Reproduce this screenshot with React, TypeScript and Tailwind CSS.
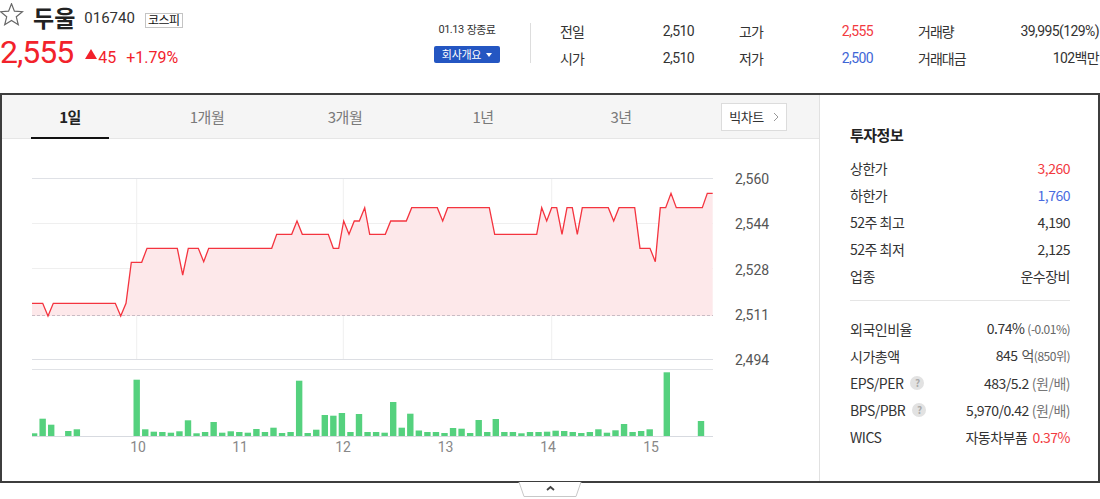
import React from "react";

const LINE: [number, number][] = [
  [32, 303.3], [42.7, 303.3], [48, 316], [53.3, 303.3], [115.3, 303.3], [120.7, 316], [126, 303.3],
  [131.3, 262.3], [141.7, 262.3], [147, 248.3], [177.3, 248.3], [182.7, 275], [188.3, 248.3],
  [198.3, 248.3], [203.7, 261.7], [208.7, 248.3], [271.7, 248.3], [276.7, 234.3], [291.7, 234.3],
  [297, 221], [302.3, 234.3], [328.3, 234.3], [333.3, 248.3], [338.7, 248.3], [343.7, 221],
  [349, 234.3], [354.3, 221], [359.3, 221], [364.7, 207.7], [369.7, 234.3], [385.3, 234.3],
  [390.7, 221], [406.3, 221], [411.7, 207.7], [437.3, 207.7], [442.7, 221], [447.7, 207.7],
  [489.3, 207.7], [494.7, 234.3], [536.7, 234.3], [541.7, 207.7], [546.7, 221], [551.7, 207.7],
  [556.7, 207.7], [562, 234.3], [567, 207.7], [572.3, 207.7], [577.3, 234.3], [582.3, 207.7],
  [608.3, 207.7], [613.7, 221], [619, 207.7], [634.7, 207.7], [640, 248.3], [650, 248.3],
  [655.3, 261.7], [660.3, 207.7], [665.7, 207.7], [671, 193.3], [676.3, 207.7], [702.3, 207.7],
  [707.3, 193.3], [712.7, 193.3],
];

const VOLS: Record<number, number> = {
  0: 433.3, 1: 418.7, 2: 424.7, 4: 431, 5: 429.3, 12: 379.7, 13: 429.3, 14: 431.7, 15: 432, 16: 432.7,
  17: 431.3, 18: 420.3, 19: 433.3, 20: 432, 21: 422, 22: 432.7, 23: 431.3, 24: 432, 25: 432.7, 26: 429,
  27: 432, 28: 427.7, 29: 433, 30: 432, 31: 380.7, 32: 433, 33: 429.7, 34: 415, 35: 415.7, 36: 413,
  37: 432, 38: 414, 39: 432, 40: 432, 41: 432.7, 42: 402, 43: 427.7, 44: 413.7, 45: 430.5, 46: 432,
  47: 432, 48: 433, 49: 428, 50: 428.7, 51: 433, 52: 420, 53: 432, 54: 419, 55: 432, 56: 432,
  57: 433.3, 58: 432, 59: 432, 60: 431.7, 61: 430.7, 62: 431, 63: 432, 64: 433, 65: 432, 66: 429.3,
  67: 432.7, 68: 430.3, 69: 424, 70: 432, 71: 431, 72: 429.3, 74: 372.3, 78: 421,
};

const KR = { fontFamily: '"Noto Sans CJK KR", "Noto Sans", sans-serif' };
const RB = { fontFamily: 'Roboto, "Noto Sans CJK KR", sans-serif' };

function Star() {
  return (
    <svg width="25" height="24" viewBox="0 0 25 24" className="-ml-[1px]">
      <polygon
        points="12.5,0.8 15.4,8.1 23.5,8.7 17.3,13.8 19.3,21.8 12.5,17.5 5.7,21.8 7.7,13.8 1.5,8.7 9.6,8.1"
        fill="none"
        stroke="#666"
        strokeWidth="1.2"
        strokeLinejoin="miter"
      />
    </svg>
  );
}

function Chart() {
  const pts = LINE.map((p) => p.join(",")).join(" ");
  const area = `32,316 ${pts} 712.7,316`;
  const bars: React.ReactNode[] = [];
  Object.entries(VOLS).forEach(([k, top]) => {
    const i = Number(k);
    let x = 34.1 + i * 8.55 - 3.2;
    let w = 6.4;
    if (x < 32) {
      w = w - (32 - x);
      x = 32;
    }
    bars.push(<rect key={i} x={x} y={top} width={w} height={436 - top} fill="#55d17e" />);
  });
  const yLabels: [string, number][] = [
    ["2,560", 179],
    ["2,544", 224],
    ["2,528", 269.5],
    ["2,511", 314.5],
    ["2,494", 359.5],
  ];
  const xLabels: [string, number][] = [
    ["10", 138],
    ["11", 240],
    ["12", 343],
    ["13", 445.5],
    ["14", 548],
    ["15", 651],
  ];
  return (
    <svg width="817" height="342" viewBox="2 139 817 342" className="block">
      {[136.7, 343.3, 551.7].map((x) => (
        <line key={x} x1={x} y1={178} x2={x} y2={359} stroke="#efefef" strokeWidth="1" />
      ))}
      <line x1="32" y1="178.5" x2="713" y2="178.5" stroke="#dfe1e6" strokeWidth="1" />
      <line x1="32" y1="223.5" x2="713" y2="223.5" stroke="#efefef" strokeWidth="1" />
      <line x1="32" y1="268.5" x2="713" y2="268.5" stroke="#efefef" strokeWidth="1" />
      <polygon points={area} fill="#fde8ea" />
      <line x1="32" y1="315.5" x2="713" y2="315.5" stroke="#c9bcc4" strokeWidth="1" strokeDasharray="3 2" />
      <polyline points={pts} fill="none" stroke="#f4343f" strokeWidth="1.3" strokeLinejoin="miter" />
      <line x1="32" y1="359.5" x2="713" y2="359.5" stroke="#dcdee3" strokeWidth="1" />
      <line x1="32" y1="369.5" x2="713" y2="369.5" stroke="#e0e2e6" strokeWidth="1" />
      {bars}
      <line x1="32" y1="436.5" x2="713" y2="436.5" stroke="#d7dae0" strokeWidth="1" />
      {yLabels.map(([t, y]) => (
        <text key={t} x="735" y={y + 5} fontSize="14" fill="#555" style={RB}>
          {t}
        </text>
      ))}
      {xLabels.map(([t, x]) => (
        <text key={t} x={x} y={452} fontSize="14" fill="#888" textAnchor="middle" style={RB}>
          {t}
        </text>
      ))}
    </svg>
  );
}

function HeaderCell({ label, value, color }: { label: string; value: string; color?: string }) {
  return (
    <div className="flex h-[27px] items-center justify-between">
      <span className="text-[14px] leading-[20px] tracking-[-1px] text-[#333]" style={KR}>
        {label}
      </span>
      <span className="text-[14px] leading-[20px] tracking-[-0.6px]" style={{ ...RB, color: color || "#333" }}>
        {value}
      </span>
    </div>
  );
}

function InfoRow({ label, children, help }: { label: string; children: React.ReactNode; help?: boolean }) {
  return (
    <div className="flex h-[27px] items-center justify-between text-[14px] leading-[20px] tracking-[-0.5px] text-[#333]">
      <span className="flex items-center">
        {label}
        {help && (
          <span className="ml-[7px] flex h-[14px] w-[14px] items-center justify-center rounded-full bg-[#e2e2e2] text-[10px] font-bold leading-none text-[#aaa]">
            ?
          </span>
        )}
      </span>
      <span className="flex items-baseline">{children}</span>
    </div>
  );
}

export default function App() {
  const tabs = [
    { t: "1일", w: "w-[136px]", active: true },
    { t: "1개월", w: "w-[138px]" },
    { t: "3개월", w: "w-[138px]" },
    { t: "1년", w: "w-[138px]" },
    { t: "3년", w: "w-[138px]" },
  ];
  return (
    <div className="w-[1100px] h-[499px] bg-white overflow-hidden" style={KR}>
      {/* header */}
      <div className="flex h-[93px] items-start">
        <div className="w-[434px] flex flex-col">
          <div className="flex h-[30px] items-center">
            <Star />
            <span className="ml-[9px] mt-[4px] text-[23px] font-bold leading-[30px] text-[#222]">두울</span>
            <span className="ml-[9px] mt-[6px] text-[15px] leading-[20px] text-[#333]" style={RB}>
              016740
            </span>
            <span className="ml-[10px] mt-[10px] flex h-[15px] items-center border border-[#c4c4c4] px-[2px] text-[12px] leading-none text-[#111] tracking-[-0.5px]">
              코스피
            </span>
          </div>
          <div className="mt-[6px] flex items-baseline text-[#f2222b]" style={RB}>
            <span className="text-[32px] leading-none tracking-[-1px]">2,555</span>
            <svg width="12" height="10" viewBox="0 0 12 10" className="ml-[12px] self-center mt-[4px]">
              <polygon points="6,0 12,10 0,10" fill="#f2222b" />
            </svg>
            <span className="ml-[1px] text-[16px] leading-none">45</span>
            <span className="ml-[10px] text-[16px] leading-none">+1.79%</span>
          </div>
        </div>
        <div className="w-[66px] flex flex-col">
          <div className="mt-[21px] flex h-[17px] items-center justify-center text-[11px] leading-none tracking-[-0.5px] text-[#333]">
            <span style={RB}>01.13</span>
            <span className="ml-[3px]">장종료</span>
          </div>
          <div className="mt-[8px] flex h-[17px] items-center justify-center rounded-[2px] bg-[#2456c2] text-[11px] leading-none tracking-[-0.3px] text-white">
            회사개요
            <svg width="6" height="4" viewBox="0 0 6 4" className="ml-[5px]">
              <polygon points="0,0 6,0 3,4" fill="#fff" />
            </svg>
          </div>
        </div>
        <div className="ml-[30px] mt-[23px] h-[40px] w-px bg-[#dddddd]" />
        <div className="ml-[29px] pt-[17px] grid content-start grid-cols-[134px_134px_181px] grid-rows-[27px_27px] gap-x-[45px]">
          <HeaderCell label="전일" value="2,510" />
          <HeaderCell label="고가" value="2,555" color="#f23a3f" />
          <HeaderCell label="거래량" value="39,995(129%)" />
          <HeaderCell label="시가" value="2,510" />
          <HeaderCell label="저가" value="2,500" color="#3e66d6" />
          <HeaderCell label="거래대금" value="102백만" />
        </div>
      </div>

      {/* main box */}
      <div className="flex h-[390px] border-2 border-[#3d3d3d]">
        <div className="w-[818px] flex flex-col border-r border-[#e1e1e1]">
          <div className="flex h-[44px] items-center border-b border-[#e6e6e6] bg-[#f5f5f5]">
            {tabs.map((tab) => (
              <div key={tab.t} className={`${tab.w} relative flex h-full items-center justify-center`}>
                <span
                  className={
                    tab.active
                      ? "text-[15px] font-bold leading-[20px] tracking-[-0.5px] text-[#222]"
                      : "text-[15px] leading-[20px] tracking-[-0.5px] text-[#7a7a7a]"
                  }
                >
                  {tab.t}
                </span>
                {tab.active && <span className="absolute bottom-[-1px] left-[29px] h-[2px] w-[78px] bg-[#111]" />}
              </div>
            ))}
            <div className="ml-[31px] flex h-[28px] w-[66px] items-center justify-center border border-[#dcdcdc] bg-white">
              <span className="text-[13px] leading-[18px] tracking-[-0.5px] text-[#333]">빅차트</span>
              <svg width="6" height="10" viewBox="0 0 6 10" className="ml-[9px]">
                <polyline points="1,1 5,5 1,9" fill="none" stroke="#999" strokeWidth="1" />
              </svg>
            </div>
          </div>
          <Chart />
        </div>
        <div className="flex-1 pl-[30px] pr-[28px]">
          <div className="mt-[30px] flex h-[20px] items-center text-[15px] font-bold leading-[20px] tracking-[-0.5px] text-[#222]">
            투자정보
          </div>
          <div className="mt-[9px]">
            <InfoRow label="상한가">
              <span className="text-[#f23a3f]">3,260</span>
            </InfoRow>
            <InfoRow label="하한가">
              <span className="text-[#4a6be0]">1,760</span>
            </InfoRow>
            <InfoRow label="52주 최고">4,190</InfoRow>
            <InfoRow label="52주 최저">2,125</InfoRow>
            <InfoRow label="업종">운수장비</InfoRow>
          </div>
          <div className="mt-[11px] h-px bg-[#e5e5e5]" />
          <div className="mt-[14px]">
            <InfoRow label="외국인비율">
              0.74%<span className="ml-[3px] text-[12px] text-[#666]">(-0.01%)</span>
            </InfoRow>
            <InfoRow label="시가총액">
              845<span className="ml-[4px] text-[#555]">억</span>
              <span className="text-[12px] text-[#666]">(850위)</span>
            </InfoRow>
            <InfoRow label="EPS/PER" help>
              483/5.2<span className="ml-[3px] text-[#777]">(원/배)</span>
            </InfoRow>
            <InfoRow label="BPS/PBR" help>
              5,970/0.42<span className="ml-[3px] text-[#777]">(원/배)</span>
            </InfoRow>
            <InfoRow label="WICS">
              자동차부품<span className="ml-[5px] text-[#f23a3f]">0.37%</span>
            </InfoRow>
          </div>
        </div>
      </div>

      {/* toggle */}
      <div className="flex justify-center">
        <svg width="64" height="16" viewBox="0 0 64 16" className="-mt-px">
          <polyline points="1,0 6,14.5 58,14.5 63,0" fill="#fff" stroke="#c8c8c8" strokeWidth="1" />
          <polyline points="29,8 32.5,5 36,8" fill="none" stroke="#444" strokeWidth="1.8" />
        </svg>
      </div>
    </div>
  );
}
